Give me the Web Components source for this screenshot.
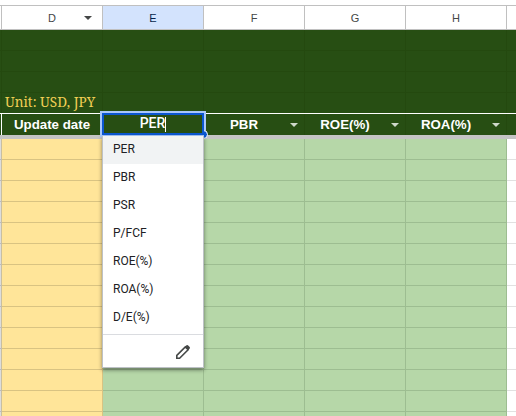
<!DOCTYPE html>
<html lang="en">
<head>
<meta charset="utf-8">
<title>Sheet</title>
<style>
html,body{margin:0;width:516px;height:416px;overflow:hidden;background:#fff;font-family:"Liberation Sans",Arial,sans-serif}
</style>
</head>
<body>
<sheet-view></sheet-view>
<script>
const define = (name, html, setup) => customElements.define(name, class extends HTMLElement {
  connectedCallback() {
    if (this.shadowRoot) return;
    const t = document.createElement('template');
    t.innerHTML = html;
    this.attachShadow({mode: 'open'}).append(t.content.cloneNode(true));
    if (setup) setup(this);
  }
});

define('sheet-cell', `<style>
:host{display:flex;box-sizing:border-box;min-width:0;height:100%;align-items:center;border-right:1px solid var(--line);background:var(--fill);position:relative}
:host(:last-child){border-right:0}
.text{flex:1;text-align:center;white-space:nowrap}
:host([start]) .text{text-align:left}
svg{display:none;flex:none;width:20px;height:7px;color:#cfd8cb}
:host([arrow]) svg{display:block}
:host([header]) svg{position:absolute;right:4px;top:8px;color:#444746}
</style><span class="text"><slot></slot></span><svg viewBox="0 0 20 7"><path d="M6 2h8l-4 4z" fill="currentColor"/></svg>`);

define('sheet-row', `<style>
:host{display:grid;box-sizing:border-box;grid-template-columns:2px repeat(5,101px) 9px;height:21px;border-bottom:1px solid var(--row-line)}
</style><slot></slot>`);

define('menu-item', `<style>
:host{display:flex;align-items:center;height:28px;box-sizing:border-box;padding:0 0 2px 10px;font:12px Roboto,sans-serif;color:#202124}
:host([active]){background:#f1f3f4}
span{white-space:nowrap}
</style><span><slot></slot></span>`);

define('choice-menu', `<style>
:host{display:block;box-sizing:border-box;width:102px;height:232px;background:#fff;border:1px solid #bdc1c6;border-top:0;box-shadow:0 2px 4px rgba(0,0,0,.45)}
.items{height:198px}
footer{height:33px;border-top:1px solid #dadce0;display:flex;align-items:center;justify-content:flex-end;padding:2px 12px 0 0;box-sizing:border-box}
</style><div class="items"><slot></slot></div><footer><svg width="16" height="16" viewBox="0 0 16 16" fill="none" stroke="#444746"><path d="M1.8 14.2v-2.8l8.5-8.5 2.8 2.8-8.5 8.5z" stroke-width="1.6"/><path d="M10 2.8l1.5-1.5q.7-.6 1.4 0l1.8 1.8q.6.7 0 1.4L13.200 6z" fill="#444746" stroke="none"/></svg></footer>`);

define('cell-editor', `<style>
:host{display:block;position:relative;width:102px;height:22px}
.box{box-sizing:border-box;width:102px;height:22px;border:2px solid #0b57d0;box-shadow:0 0 0 2px #a8c7fa;background:#274e13;color:#fff;display:flex;align-items:center;justify-content:center;font:500 14px/18px Roboto,"Liberation Sans",sans-serif}
.label{padding-bottom:2px}
.caret{width:1px;height:15px;background:#fff}
.handle{position:absolute;left:97px;top:17px;width:7px;height:7px;border:1px solid #fff;border-radius:50%;background:#0b57d0;clip-path:inset(0 0 0 5px)}
</style><div class="box"><span class="label"><slot></slot></span><span class="caret"></span></div><div class="handle"></div>`);

define('sheet-view', `<style>
:host{display:block;position:relative;width:516px;height:416px;overflow:hidden}
.head{margin-top:5px;height:25px;border-top:1px solid #c0c0c0;--line:#c0c0c0;--row-line:#c0c0c0;--fill:#fff;font:11px "Liberation Sans",Arial,sans-serif;color:#444746}
.head .sel{--fill:#d3e3fd;color:#041e49}
.dark{--fill:#274e13;--line:#24490f;--row-line:#24490f}
.unit{--row-line:#fff;color:#f1cf55;font:13.6px/16px "Noto Serif","Liberation Serif",serif}
.unit sheet-cell[start]{padding:0 0 2px 3px;z-index:1}
.titles{border-bottom:0;font:bold 13.3px "Liberation Sans",Arial,sans-serif;color:#fff}
.freeze{height:4px;background:#c4c4c4}
.green{--fill:#b6d7a8;--line:#9dbd91}
.yellow{--fill:#ffe599;--line:#d9c382}
.edge{--fill:#dcdcdc;--line:#c9bfa0}
.blank{--fill:#fff;--line:#fff}
.data{border-bottom:0}
.data sheet-cell{border-bottom:1px solid #9dbd91}
.data .yellow{border-bottom-color:#d9c382}
.data .edge{border-bottom-color:#bbb}
.data .blank{border-bottom-color:#e1e1e1}
cell-editor{position:absolute;left:102px;top:113px;z-index:2}
choice-menu{position:absolute;left:102px;top:136px;z-index:3}
</style>
<sheet-row class="head"><sheet-cell></sheet-cell><sheet-cell arrow header>D</sheet-cell><sheet-cell class="sel">E</sheet-cell><sheet-cell>F</sheet-cell><sheet-cell>G</sheet-cell><sheet-cell>H</sheet-cell><sheet-cell></sheet-cell></sheet-row>
<div id="rows"></div>
<cell-editor>PER</cell-editor>
<choice-menu><menu-item active>PER</menu-item><menu-item>PBR</menu-item><menu-item>PSR</menu-item><menu-item>P/FCF</menu-item><menu-item>ROE(%)</menu-item><menu-item>ROA(%)</menu-item><menu-item>D/E(%)</menu-item></choice-menu>`, el => {
  const c = '<sheet-cell></sheet-cell>';
  const blank = `<sheet-row class="dark">${c.repeat(7)}</sheet-row>`;
  const unit = `<sheet-row class="dark unit">${c}<sheet-cell start>Unit: USD, JPY</sheet-cell>${c.repeat(5)}</sheet-row>`;
  const titles = `<sheet-row class="dark titles"><sheet-cell style="--line:#fff"></sheet-cell><sheet-cell>Update date</sheet-cell>${c}<sheet-cell arrow>PBR</sheet-cell><sheet-cell arrow>ROE(%)</sheet-cell><sheet-cell arrow>ROA(%)</sheet-cell>${c}</sheet-row>`;
  const data = `<sheet-row class="data"><sheet-cell class="edge"></sheet-cell><sheet-cell class="yellow"></sheet-cell>${'<sheet-cell class="green"></sheet-cell>'.repeat(4)}<sheet-cell class="blank"></sheet-cell></sheet-row>`;
  el.shadowRoot.getElementById('rows').innerHTML = blank.repeat(3) + unit + titles + '<div class="freeze"></div>' + data.repeat(14);
});
</script>
</body>
</html>
